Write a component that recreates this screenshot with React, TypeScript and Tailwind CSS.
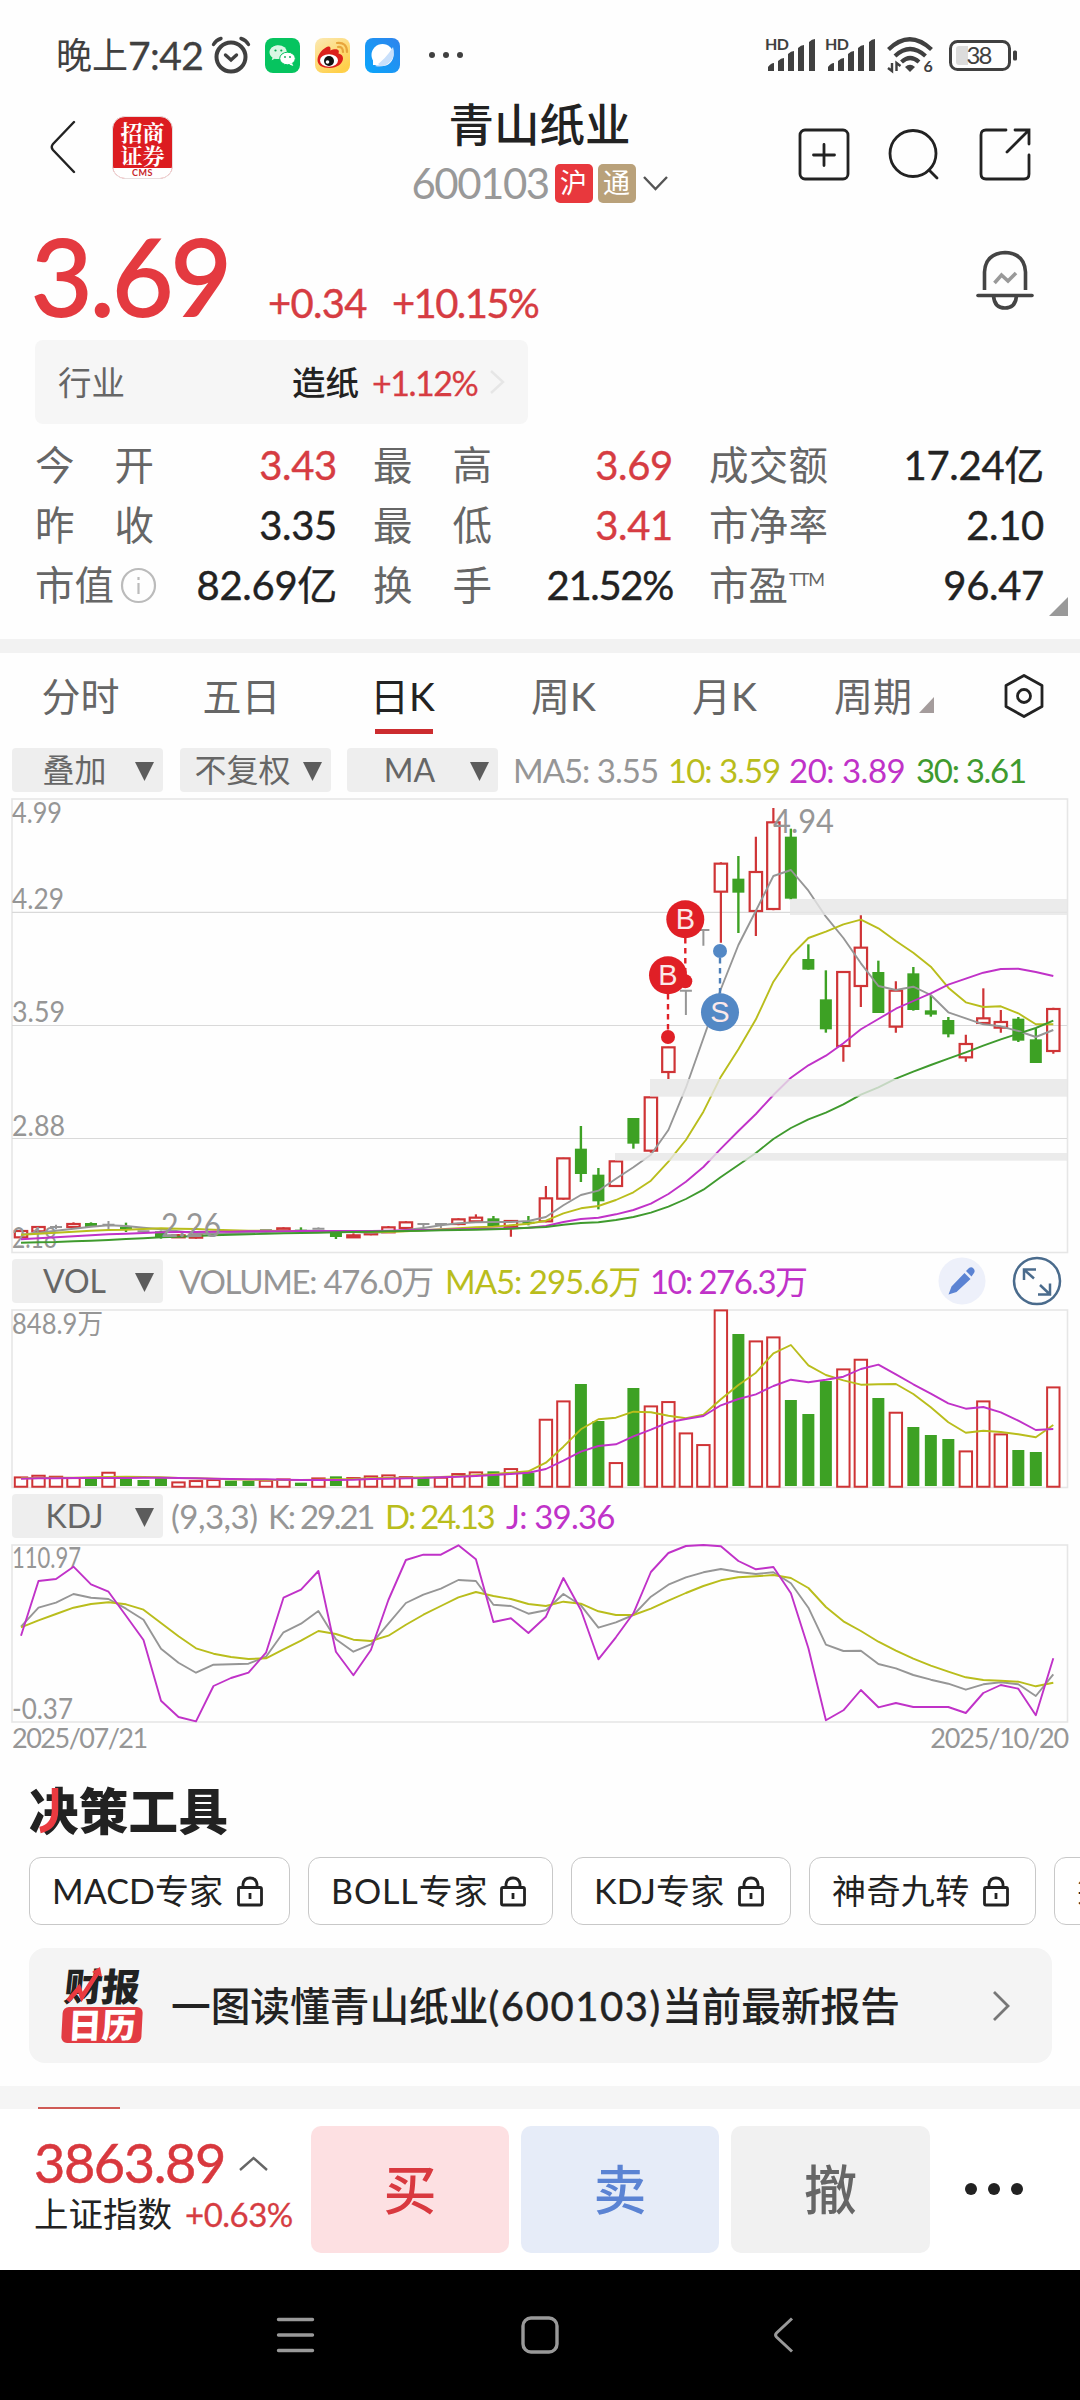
import type { ReactNode } from 'react';
import clsx from 'clsx';

type CandleKind = 'up' | 'down' | 'flat';

interface Candle {
  kind: CandleKind;
  high: number;
  top: number;
  bottom: number;
  low: number;
}

// Plot values are kept in thirds of a pixel, counted from the top of each canvas.
const px = (v: number) => v / 3;
const BAR_STEP = 17.497;
const barX = (i: number) => 21 + i * BAR_STEP;

const RED = '#cf3436';
const GREEN = '#3da124';
const GRAY = '#969696';
const YELLOW = '#b9bd1c';
const MAGENTA = '#c032c8';
const DARK_GREEN = '#3f9a2e';

const candle = (kind: CandleKind, high: number, top: number, bottom: number, low: number): Candle => ({
  kind,
  high,
  top,
  bottom,
  low,
});

const CANDLES: Candle[] = [
  candle('up', 1320, 1323, 1342, 1342),
  candle('up', 1309, 1311, 1324, 1324),
  candle('flat', 1304, 1311, 1311, 1318),
  candle('up', 1297, 1302, 1311, 1311),
  candle('down', 1297, 1299, 1311, 1311),
  candle('flat', 1293, 1304, 1304, 1320),
  candle('down', 1298, 1310, 1318, 1326),
  candle('flat', 1323, 1324, 1324, 1325),
  candle('down', 1322, 1324, 1344, 1346),
  candle('up', 1332, 1336, 1342, 1342),
  candle('up', 1335, 1336, 1343, 1346),
  candle('flat', 1328, 1330, 1330, 1332),
  candle('flat', 1322, 1324, 1324, 1326),
  candle('flat', 1320, 1323, 1323, 1325),
  candle('flat', 1318, 1320, 1320, 1322),
  candle('up', 1312, 1315, 1322, 1324),
  candle('down', 1312, 1319, 1323, 1325),
  candle('flat', 1312, 1316, 1316, 1319),
  candle('down', 1322, 1325, 1341, 1347),
  candle('up', 1330, 1336, 1342, 1342),
  candle('up', 1320, 1328, 1333, 1336),
  candle('up', 1308, 1312, 1327, 1327),
  candle('up', 1294, 1297, 1314, 1318),
  candle('flat', 1302, 1302, 1302, 1314),
  candle('flat', 1302, 1302, 1302, 1314),
  candle('up', 1285, 1288, 1302, 1306),
  candle('up', 1273, 1283, 1294, 1294),
  candle('down', 1278, 1285, 1308, 1310),
  candle('up', 1291, 1293, 1311, 1340),
  candle('down', 1278, 1295, 1301, 1306),
  candle('up', 1188, 1225, 1294, 1297),
  candle('up', 1103, 1105, 1226, 1229),
  candle('down', 1008, 1076, 1152, 1176),
  candle('down', 1134, 1154, 1234, 1258),
  candle('up', 1111, 1114, 1188, 1188),
  candle('down', 984, 984, 1061, 1076),
  candle('up', 920, 922, 1082, 1088),
  candle('up', 770, 772, 846, 867),
  candle('flat', 602, 602, 602, 675),
  candle('flat', 420, 420, 420, 467),
  candle('up', 217, 221, 305, 458),
  candle('down', 198, 266, 308, 429),
  candle('up', 140, 246, 363, 438),
  candle('up', 54, 97, 357, 361),
  candle('down', 116, 140, 326, 329),
  candle('down', 463, 507, 539, 539),
  candle('down', 541, 628, 718, 728),
  candle('up', 545, 546, 768, 815),
  candle('up', 376, 473, 588, 651),
  candle('down', 512, 546, 669, 669),
  candle('up', 574, 602, 710, 728),
  candle('down', 531, 550, 660, 662),
  candle('down', 616, 661, 674, 680),
  candle('down', 681, 690, 733, 742),
  candle('up', 734, 762, 802, 815),
  candle('up', 595, 685, 699, 699),
  candle('up', 660, 696, 713, 728),
  candle('down', 681, 686, 752, 756),
  candle('down', 715, 748, 819, 819),
  candle('up', 653, 657, 783, 791),
];

const PRICE_LINES = [
  {
    color: GRAY,
    values: [
      1334, 1328, 1322, 1316, 1310, 1306, 1308, 1313, 1318, 1324, 1330, 1332, 1330, 1328, 1326, 1324, 1322, 1322, 1324,
      1326, 1328, 1326, 1320, 1314, 1306, 1300, 1297, 1296, 1296, 1293, 1281, 1246, 1215, 1202, 1166, 1132, 1094, 1020,
      893, 745, 597, 465, 362, 258, 240, 302, 380, 444, 520, 588, 600, 590, 615, 667, 685, 703, 709, 723, 741, 720,
    ],
  },
  {
    color: YELLOW,
    values: [
      1334, 1331, 1328, 1325, 1322, 1320, 1319, 1317, 1315, 1316, 1317, 1319, 1321, 1322, 1322, 1323, 1323, 1324, 1325,
      1326, 1326, 1326, 1324, 1321, 1318, 1315, 1312, 1310, 1306, 1301, 1292, 1270, 1255, 1248, 1230, 1207, 1172, 1115,
      1050, 965, 860, 778, 688, 575, 497, 444, 425, 403, 389, 415, 453, 488, 530, 593, 637, 651, 649, 670, 703, 703,
    ],
  },
  {
    color: MAGENTA,
    values: [
      1348, 1345, 1342, 1339, 1336, 1333, 1331, 1329, 1327, 1326, 1326, 1325, 1325, 1324, 1324, 1324, 1323, 1323, 1323,
      1323, 1323, 1322, 1321, 1320, 1319, 1318, 1317, 1316, 1315, 1313, 1308, 1296, 1287, 1283, 1273, 1260, 1241, 1212,
      1175, 1131, 1076, 1023, 972, 915, 863, 826, 797, 760, 718, 687, 656, 633, 610, 584, 566, 548, 537, 536, 546, 558,
    ],
  },
  {
    color: DARK_GREEN,
    values: [
      1358, 1357, 1356, 1354, 1352, 1350, 1347, 1345, 1342, 1340, 1338, 1336, 1334, 1333, 1331, 1330, 1329, 1328, 1327,
      1326, 1325, 1324, 1323, 1322, 1321, 1320, 1319, 1318, 1316, 1313, 1311, 1304, 1299, 1297, 1290, 1281, 1268, 1250,
      1227, 1199, 1161, 1125, 1089, 1047, 1014, 988, 968, 943, 914, 892, 866, 845, 825, 806, 787, 767, 748, 731, 714,
      692,
    ],
  },
];

const VOLUME_TOPS = [
  681, 676, 679, 683, 684, 667, 685, 690, 683, 696, 692, 689, 692, 693, 691, 687, 698, 684, 679, 683, 678, 675, 680,
  684, 682, 671, 666, 664, 656, 668, 508, 453, 402, 513, 638, 414, 468, 455, 549, 584, 180, 252, 273, 261, 450, 492,
  393, 357, 328, 444, 487, 531, 555, 567, 603, 453, 552, 600, 606, 411,
];
const VOLUME_DOWN = [4, 6, 7, 8, 12, 13, 16, 18, 23, 27, 29, 32, 33, 35, 41, 44, 45, 46, 49, 51, 52, 53, 57, 58];

const VOLUME_LINES = [
  {
    color: YELLOW,
    values: [
      685, 684, 683, 683, 682, 681, 680, 681, 682, 684, 685, 686, 688, 689, 690, 690, 690, 689, 688, 687, 685, 684, 683,
      682, 681, 679, 676, 672, 668, 664, 638, 590, 538, 508, 503, 485, 487, 497, 505, 494, 448, 405, 368, 310, 285, 346,
      375, 391, 404, 403, 402, 432, 472, 517, 548, 542, 546, 553, 562, 525,
    ],
  },
  {
    color: MAGENTA,
    values: [
      686, 685, 685, 684, 684, 684, 684, 683, 683, 684, 685, 686, 687, 688, 688, 689, 690, 690, 690, 689, 687, 686, 685,
      684, 682, 680, 678, 675, 672, 668, 657, 632, 605, 588, 583, 559, 539, 517, 507, 498, 466, 447, 433, 408, 389, 397,
      389, 380, 357, 344, 373, 403, 431, 460, 476, 471, 487, 512, 540, 537,
    ],
  },
];

const KDJ_LINES = [
  {
    color: GRAY,
    values: [
      1130, 1073, 1058, 1032, 1043, 1047, 1076, 1109, 1196, 1238, 1268, 1244, 1243, 1241, 1220, 1147, 1121, 1083, 1168,
      1205, 1183, 1121, 1059, 1034, 1016, 990, 993, 1064, 1068, 1091, 1081, 1032, 1066, 1133, 1117, 1095, 1040, 1004,
      982, 967, 957, 966, 972, 967, 1000, 1073, 1184, 1203, 1202, 1242, 1255, 1275, 1289, 1301, 1319, 1303, 1297, 1303,
      1338, 1273,
    ],
  },
  {
    color: YELLOW,
    values: [
      1132, 1111, 1092, 1073, 1062, 1057, 1063, 1079, 1119, 1159, 1195, 1211, 1221, 1227, 1225, 1198, 1172, 1143, 1152,
      1169, 1173, 1157, 1124, 1094, 1068, 1042, 1026, 1038, 1047, 1062, 1068, 1055, 1061, 1084, 1095, 1095, 1076, 1052,
      1029, 1008, 991, 982, 979, 975, 984, 1014, 1071, 1114, 1143, 1175, 1202, 1226, 1247, 1265, 1282, 1290, 1292, 1295,
      1309, 1298,
    ],
  },
  {
    color: MAGENTA,
    values: [
      1157, 993, 987, 950, 1003, 1025, 1097, 1170, 1352, 1401, 1414, 1308, 1284, 1268, 1208, 1043, 1019, 963, 1205, 1276,
      1200, 1050, 930, 914, 914, 886, 928, 1116, 1105, 1149, 1100, 984, 1080, 1228, 1162, 1090, 966, 909, 888, 885, 889,
      933, 958, 951, 1030, 1195, 1411, 1381, 1320, 1372, 1359, 1371, 1371, 1371, 1389, 1329, 1305, 1316, 1396, 1225,
    ],
  },
];

const GAPS = [
  { x: 790, top: 327, bottom: 375 },
  { x: 650, top: 867, bottom: 920 },
  { x: 615, top: 1089, bottom: 1112 },
];

const linePoints = (values: number[]) => values.map((v, i) => `${barX(i).toFixed(1)},${px(v).toFixed(1)}`).join(' ');

const Lines = ({ lines }: { lines: { color: string; values: number[] }[] }) => (
  <>
    {lines.map((line) => (
      <polyline
        key={line.color}
        points={linePoints(line.values)}
        fill="none"
        stroke={line.color}
        strokeWidth="1.9"
        strokeLinejoin="round"
      />
    ))}
  </>
);

interface AxisTextProps {
  x: number;
  y: number;
  width: number;
  size?: number;
  children: string;
}

const AxisText = ({ x, y, width, size = 28, children }: AxisTextProps) => (
  <text x={x} y={y} fontSize={size} fill="#969696" textLength={width} lengthAdjust="spacingAndGlyphs">
    {children}
  </text>
);

const CandleMark = ({ item, index }: { item: Candle; index: number }) => {
  const x = barX(index);
  const top = px(item.top);
  const bottom = px(item.bottom);
  if (item.kind === 'flat') {
    return (
      <g stroke={GRAY} strokeWidth="2">
        <path d={`M${x - 6} ${top}h12M${x} ${px(item.high)}V${px(item.low)}`} />
      </g>
    );
  }
  if (item.kind === 'down') {
    return (
      <g>
        <path d={`M${x} ${px(item.high)}V${px(item.low)}`} stroke={GREEN} strokeWidth="2.4" />
        <rect x={x - 6} y={top} width="12" height={bottom - top} fill={GREEN} />
      </g>
    );
  }
  return (
    <g stroke={RED} strokeWidth="2.2" fill="none">
      <path d={`M${x} ${px(item.high)}V${top}M${x} ${bottom}V${px(item.low)}`} />
      <rect x={x - 6.2} y={top} width="12.4" height={bottom - top} />
    </g>
  );
};

const Marker = ({ x, y, color, letter }: { x: number; y: number; color: string; letter: string }) => (
  <g>
    <circle cx={x} cy={y} r="19" fill={color} />
    <text
      x={x}
      y={y + 10}
      textAnchor="middle"
      fontSize="29"
      fill="#fbe9ea"
      className="font-['Liberation_Sans',sans-serif]"
    >
      {letter}
    </text>
  </g>
);

// canvas starts at y = 790 of the page
const PriceChart = () => (
  <svg width="1080" height="469" viewBox="0 0 1080 469" className="block shrink-0">
    <rect x="12" y="9" width="1055.5" height="453.5" fill="none" stroke="#e6e6e6" strokeWidth="1.6" />
    {[122.3, 235.5, 348.5].map((y) => (
      <path key={y} d={`M12 ${y}H1067`} stroke="#d9d9d9" strokeWidth="1.2" />
    ))}
    {CANDLES.map((item, i) => (
      <CandleMark key={i} item={item} index={i} />
    ))}
    <AxisText x={12} y={457.5} width={45}>
      2.18
    </AxisText>
    <Lines lines={PRICE_LINES} />
    {GAPS.map((gap) => (
      <rect
        key={gap.top}
        x={gap.x}
        y={px(gap.top)}
        width={1067 - gap.x}
        height={px(gap.bottom - gap.top)}
        fill="#e6e6e6"
        opacity="0.8"
      />
    ))}
    <AxisText x={12} y={32.5} width={50}>
      4.99
    </AxisText>
    <AxisText x={12} y={119} width={52}>
      4.29
    </AxisText>
    <AxisText x={12} y={232} width={53}>
      3.59
    </AxisText>
    <AxisText x={12} y={345.5} width={53}>
      2.88
    </AxisText>
    <AxisText x={161} y={447} width={60} size={33}>
      2.26
    </AxisText>
    <AxisText x={773} y={43} width={61} size={33}>
      4.94
    </AxisText>
    <path d="M685.3 148v40M668 204v36" stroke="#e01f26" strokeWidth="2.4" strokeDasharray="5.5 4.5" />
    <path d="M720 168v36" stroke="#4d7fb8" strokeWidth="2.4" strokeDasharray="5.5 4.5" />
    <circle cx="685.3" cy="191.3" r="7" fill="#e01f26" />
    <circle cx="668" cy="247" r="7" fill="#e01f26" />
    <circle cx="720" cy="161" r="7" fill="#5388c5" />
    <Marker x={685.3} y={129.3} color="#e01f26" letter="B" />
    <Marker x={668} y={185.3} color="#e01f26" letter="B" />
    <Marker x={720} y={222.3} color="#5388c5" letter="S" />
  </svg>
);

// canvas starts at y = 1303, its values are counted from 1250
const VolumeChart = () => (
  <svg width="1080" height="191" viewBox="0 53 1080 191" className="block shrink-0">
    <rect x="12" y="60" width="1055.5" height="177.5" fill="none" stroke="#e6e6e6" strokeWidth="1.6" />
    <AxisText x={12} y={83.5} width={91}>
      848.9万
    </AxisText>
    {VOLUME_TOPS.map((top, i) =>
      VOLUME_DOWN.includes(i) ? (
        <rect key={i} x={barX(i) - 6} y={px(top)} width="12" height={px(708 - top)} fill={GREEN} />
      ) : (
        <rect
          key={i}
          x={barX(i) - 6.2}
          y={px(top) + 0.4}
          width="12.4"
          height={px(709 - top)}
          fill="#fff"
          stroke={RED}
          strokeWidth="2"
        />
      ),
    )}
    <Lines lines={VOLUME_LINES} />
  </svg>
);

// canvas starts at y = 1538, its values are counted from 1250
const KdjChart = () => (
  <svg width="1080" height="187" viewBox="0 288 1080 187" className="block shrink-0">
    <rect x="12" y="295" width="1055.5" height="177" fill="none" stroke="#e6e6e6" strokeWidth="1.6" />
    <AxisText x={12} y={318} width={69}>
      110.97
    </AxisText>
    <AxisText x={12} y={469} width={61}>
      -0.37
    </AxisText>
    <Lines lines={KDJ_LINES} />
  </svg>
);

const Signal = () => (
  <svg width="51" height="40" viewBox="0 -6 51 40" className="-mt-[6px]" fill="#404040">
    <text x="0" y="12" fontSize="16" fontWeight="700" textLength="24">
      HD
    </text>
    <path d="M3 33v-4q3-4 6-4v8zM13 33V23q3-3 6-3v13zM23 33V16q3-3 6-3v20zM33 33V10q3-3 6-3v26zM44 33V4q3-3 6-3v32z" />
  </svg>
);

const StatusBar = () => (
  <div className="flex h-[110px] shrink-0 items-center pl-[56px] pr-[62px] text-[#404040]">
    <span className="flex w-[155px] items-center whitespace-nowrap text-[36px] leading-[48px]">
      晚上
      <span className="text-[39px] tracking-[-0.6px] [-webkit-text-stroke:0.3px]">7:42</span>
    </span>
    <svg width="40" height="38" viewBox="0 0 40 38" fill="none" stroke="#404040" strokeWidth="4" strokeLinecap="round">
      <circle cx="20" cy="21" r="14.5" />
      <path d="M14.5 19l5.5 5 5.5-5M2.5 8.500Q5 4 10 2.500M37.500 8.500Q35 4 30 2.500" strokeWidth="3.4" />
    </svg>
    <svg width="35" height="35" viewBox="0 0 35 35" className="ml-[14px]">
      <rect width="35" height="35" rx="8" fill="#06c45f" />
      <path d="M13 7.500c-4.800 0-8.500 3-8.500 6.800 0 2.200 1.200 4 3 5.200l-.8 2.700 3-1.500c1 .3 2 .4 3.300.4z" fill="#d8f7e4" />
      <ellipse cx="13.500" cy="14.200" rx="8.500" ry="6.900" fill="#d8f7e4" />
      <ellipse cx="22.500" cy="20.500" rx="7.800" ry="6.300" fill="#fff" stroke="#06c45f" strokeWidth="1" />
      <path d="M27 25l1.300 3-4-1.600z" fill="#fff" />
      <g fill="#06a852">
        <circle cx="10.500" cy="12.500" r="1.100" />
        <circle cx="16.300" cy="12.500" r="1.100" />
        <circle cx="20" cy="19" r=".9" />
        <circle cx="25" cy="19" r=".9" />
      </g>
    </svg>
    <svg width="35" height="35" viewBox="0 0 35 35" className="ml-[15px]">
      <defs>
        <linearGradient id="weibo" x1="0" y1="0" x2="0.600" y2="1">
          <stop offset="0" stopColor="#fbe9b4" />
          <stop offset="1" stopColor="#ffd04a" />
        </linearGradient>
      </defs>
      <rect width="35" height="35" rx="8" fill="url(#weibo)" />
      <path
        d="M2.500 22c0-6 6-12 10.500-13.500 2-.6 3 1 2.300 4 3-1.500 8-2 8.500.5.200 1-.3 2-.3 2.500 3 .8 4.500 2.500 4.500 5 0 5-6 9.500-13.500 9.500S2.500 27 2.500 22z"
        fill="#dc1f1a"
      />
      <ellipse cx="14" cy="22.500" rx="9" ry="6.200" fill="#fff" />
      <circle cx="14" cy="23" r="5" fill="#111" />
      <circle cx="12.500" cy="24" r="1.800" fill="#fff" />
      <path d="M23 9q5-.5 5 5M22 5q10-1 10 9" fill="none" stroke="#e8a53c" strokeWidth="2.200" strokeLinecap="round" />
    </svg>
    <svg width="35" height="35" viewBox="0 0 35 35" className="ml-[15px]">
      <defs>
        <linearGradient id="cloud" x1="0" y1="1" x2="1" y2="0">
          <stop offset="0" stopColor="#0aa6fb" />
          <stop offset="1" stopColor="#2f83ec" />
        </linearGradient>
      </defs>
      <rect width="35" height="35" rx="8" fill="url(#cloud)" />
      <circle cx="17.500" cy="17" r="11" fill="#fff" />
      <path d="M28 9q3 9-3 15t-15 4q10-6 18-19z" fill="#c9e0fb" />
      <path d="M8 19v8h6z" fill="#fff" />
    </svg>
    <div className="ml-[29px] flex gap-2">
      <i className="size-[6px] rounded-full bg-[#404040]" />
      <i className="size-[6px] rounded-full bg-[#404040]" />
      <i className="size-[6px] rounded-full bg-[#404040]" />
    </div>
    <div className="ml-auto flex items-center">
      <Signal />
      <div className="ml-[9px]">
        <Signal />
      </div>
      <svg width="47" height="40" viewBox="0 -1 47 40" className="ml-[11px] mt-[2px]" fill="none" stroke="#404040">
        <path d="M1.500 12.500Q22.500-8 44.500 12.500M8 19Q23 5 38.500 19M14.500 25Q23 17 32 25" strokeWidth="4.200" />
        <path d="M18 30q5-4.500 10 0l-5 5z" fill="#404040" stroke="none" />
        <path d="M5 26v8l-4-3M9.500 34v-8l4 3" strokeWidth="2.400" />
        <text x="36.500" y="34.500" fontSize="16" fontWeight="700" fill="#404040" stroke="none">
          6
        </text>
      </svg>
      <svg width="69" height="31" viewBox="0 0 69 31" className="ml-[15px]">
        <rect x="1.500" y="1.500" width="59" height="28" rx="7" fill="none" stroke="#404040" strokeWidth="3" />
        <path d="M10 6h9v19h-9q-3 0-3-3V9q0-3 3-3z" fill="#dcdcdc" />
        <rect x="64" y="10.500" width="4" height="10" rx="1.500" fill="#404040" />
        <text x="17.500" y="24" fontSize="24" fill="#404040" textLength="26">
          38
        </text>
      </svg>
    </div>
  </div>
);

const Header = () => (
  <div className="flex h-[105px] shrink-0 text-[#222]">
    <div className="flex w-[412px] items-start pl-[49px]">
      <svg width="27" height="54" viewBox="0 0 27 54" className="mt-[10px]" fill="none" stroke="#222" strokeWidth="2.400">
        <path d="M25 2L4 24q-2.500 3 0 6l21 22" strokeLinecap="round" />
      </svg>
      <div className="ml-9 mt-[6px] h-[63px] w-[61px] overflow-hidden rounded-[13px] border border-[#e8dede] bg-[#dc1c20] text-center text-white">
        <div className="pt-[3px] font-['Noto_Serif_CJK_SC','Noto_Sans_CJK_SC',serif] text-[22px] font-bold leading-[23px]">
          招商
          <br />
          证券
        </div>
        <div className="mt-[2px] h-3 bg-white text-[9px] font-bold leading-[10px] tracking-[0.5px] text-[#c8272b]">CMS</div>
      </div>
    </div>
    <div className="flex w-[255px] flex-col items-center">
      <h1 className="mt-[-8px] h-[46px] whitespace-nowrap text-[45.500px] font-medium leading-[46px]">青山纸业</h1>
      <div className="mt-[12px] flex h-[46px] items-center">
        <span className="w-[143px] text-[42px] leading-[44px] tracking-[-1.500px] text-[#999]">600103</span>
        <span className="h-[39px] w-[38px] rounded-[5px] bg-[#e8383d] text-center text-[27px] leading-[38px] text-white">
          沪
        </span>
        <span className="ml-[5px] h-[39px] w-[38px] rounded-[5px] bg-[#b9a17a] text-center text-[27px] leading-[38px] text-white">
          通
        </span>
        <svg width="25" height="15" viewBox="0 0 25 15" className="ml-[7px]" fill="none" stroke="#555" strokeWidth="2.400">
          <path d="M1 1l11.500 12L24 1" />
        </svg>
      </div>
    </div>
    <div className="flex flex-1 items-start justify-end pr-[48px] pt-[18px]">
      <svg width="52" height="54" viewBox="0 0 52 54" fill="none" stroke="#222" strokeWidth="2.800" strokeLinecap="round">
        <rect x="2" y="2" width="48" height="49" rx="5" />
        <path d="M26 16.500v21M15.500 27h21" />
      </svg>
      <svg
        width="52"
        height="54"
        viewBox="0 0 52 54"
        className="ml-[38px]"
        fill="none"
        stroke="#222"
        strokeWidth="2.800"
        strokeLinecap="round"
      >
        <circle cx="25" cy="25.500" r="23" />
        <path d="M41 42l8 8" />
      </svg>
      <svg
        width="54"
        height="54"
        viewBox="0 0 54 54"
        className="ml-[38px]"
        fill="none"
        stroke="#222"
        strokeWidth="2.800"
        strokeLinecap="round"
      >
        <path d="M28 2H8Q3 2 3 7v39q0 5 5 5h38q5 0 5-5V27M37 2h14v14M50 3L29 24" />
      </svg>
    </div>
  </div>
);

const Quote = () => (
  <div className="flex h-[125px] shrink-0 text-[#e43a40]">
    <span className="mt-[8px] w-[236px] pl-[31px] text-[106px] leading-[104px] tracking-[-2.800px] [-webkit-text-stroke:1.8px]">
      3.69
    </span>
    <span className="ml-[32px] mt-[65px] w-[124px] whitespace-nowrap text-[40px] leading-[46px] tracking-[-0.7px] text-[#d63c42] [-webkit-text-stroke:0.4px]">
      +0.34
    </span>
    <span className="mt-[65px] whitespace-nowrap text-[40px] leading-[46px] tracking-[-1.600px] text-[#d63c42] [-webkit-text-stroke:0.4px]">
      +10.15%
    </span>
    <svg width="58" height="60" viewBox="0 0 58 60" className="ml-auto mr-[46px] mt-[35px]" fill="none" stroke="#444" strokeWidth="3.600">
      <path d="M8.500 40V22Q9.500 3.500 29 2.500 48.500 3.500 49.500 22v18" />
      <path d="M2 45.500h54" strokeLinecap="round" />
      <path d="M17.500 46q1 12 11.500 12t11.500-12" />
      <path d="M18.500 33l7-8 6.500 6 8-8" stroke="#999" />
    </svg>
  </div>
);

const Industry = () => (
  <div className="mx-[35px] flex h-[84px] w-[493px] shrink-0 items-center rounded-[8px] bg-[#f6f6f6] pl-[23px]">
    <span className="text-[33.500px] text-[#666]">行业</span>
    <span className="ml-[167px] text-[33.500px] font-medium text-[#222]">造纸</span>
    <span className="ml-[13px] w-[118px] whitespace-nowrap text-[34px] tracking-[-1.500px] text-[#d63c42] [-webkit-text-stroke:0.3px]">
      +1.12%
    </span>
    <svg width="15" height="24" viewBox="0 0 15 24" fill="none" stroke="#e6e6e6" strokeWidth="2.400">
      <path d="M1 1l12 11L1 23" />
    </svg>
  </div>
);

interface StatProps {
  label: string;
  value: string;
  red?: boolean;
  extra?: ReactNode;
}

const STATS: StatProps[] = [
  { label: '今开', value: '3.43', red: true },
  { label: '最高', value: '3.69', red: true },
  { label: '成交额', value: '17.24亿' },
  { label: '昨收', value: '3.35' },
  { label: '最低', value: '3.41', red: true },
  { label: '市净率', value: '2.10' },
  {
    label: '市值',
    value: '82.69亿',
    extra: (
      <svg width="37" height="37" viewBox="0 0 37 37" fill="none" stroke="#bbb" strokeWidth="2.200" className="ml-[6px] shrink-0">
        <circle cx="18.500" cy="18.500" r="16.500" />
        <path d="M18.500 16v11M18.500 10v3" />
      </svg>
    ),
  },
  { label: '换手', value: '21.52%' },
  {
    label: '市盈',
    value: '96.47',
    extra: <span className="mb-3 ml-[1px] text-[18px] leading-none tracking-[-1px]">TTM</span>,
  },
];

const Stat = ({ label, value, red, extra }: StatProps) => (
  <div className="flex h-[60px] items-center justify-between whitespace-nowrap">
    <div className={clsx('flex w-[119px] items-center text-[39.5px] text-[#666]', !extra && 'justify-between')}>
      {extra ? (
        <>
          <span>{label}</span>
          {extra}
        </>
      ) : (
        label.split('').map((char) => <span key={char}>{char}</span>)
      )}
    </div>
    <span
      className={clsx(
        'text-[40px] [-webkit-text-stroke:0.4px]',
        value.endsWith('%') ? 'tracking-[-1.300px]' : 'tracking-[-0.300px]',
        red ? 'text-[#d63c42]' : 'text-[#222]',
      )}
    >
      {value}
    </span>
  </div>
);

const Stats = () => (
  <div className="relative h-[215px] shrink-0 pl-[35px] pt-[11px]">
    <div className="grid grid-cols-[302px_300px_335px] gap-x-[36px]">
      {STATS.map((stat) => (
        <Stat key={stat.label} {...stat} />
      ))}
    </div>
    <svg width="19" height="19" viewBox="0 0 19 19" className="absolute left-[1049px] top-[173px]">
      <path d="M19 0v19H0z" fill="#999" />
    </svg>
  </div>
);

const TABS = ['分时', '五日', '日K', '周K', '月K', '周期'];

const Tabs = () => (
  <div className="flex h-[95px] shrink-0 text-[39px] leading-[87px] text-[#666]">
    {TABS.map((tab) => (
      <div
        key={tab}
        className={clsx('relative w-[161px] text-center', tab === '日K' && 'text-[#222]', tab === '周期' && 'pr-[25px]')}
      >
        {tab}
        {tab === '日K' && <i className="absolute left-[53px] top-[76px] h-[5px] w-[58px] bg-[#cc2c2f]" />}
        {tab === '周期' && (
          <svg width="15" height="16" viewBox="0 0 15 16" className="absolute left-[114px] top-[44px]">
            <path d="M15 0v16H0z" fill="#a49c9c" />
          </svg>
        )}
      </div>
    ))}
    <svg width="42" height="46" viewBox="0 0 42 46" className="ml-[37px] mt-[20px]" fill="none" stroke="#222" strokeWidth="2.800">
      <path d="M21 2.500L39 12.500v21L21 43.500 3 33.500v-21z" strokeLinejoin="round" />
      <circle cx="21" cy="23" r="6.500" />
    </svg>
  </div>
);

const Pill = ({ children }: { children: string }) => (
  <div className="relative h-[44px] w-[151px] rounded-[4px] bg-[#eee] pr-[26px] text-center text-[32px] leading-[44px] text-[#666]">
    {children}
    <svg width="19" height="19" viewBox="0 0 19 19" className="absolute right-[9px] top-[14px]">
      <path d="M0 0h19l-9.500 19z" fill="#5c5c5c" />
    </svg>
  </div>
);

const MainFilters = () => (
  <div className="flex h-[42px] shrink-0 items-start pl-3 text-[33px] leading-[44px]">
    <Pill>叠加</Pill>
    <div className="ml-[17px]">
      <Pill>不复权</Pill>
    </div>
    <div className="ml-4">
      <Pill>MA</Pill>
    </div>
    <div className="ml-[15px] flex whitespace-nowrap tracking-[-1px]">
      <span className="w-[155px] text-[#969696]">MA5: 3.55</span>
      <span className="w-[121px] text-[#b9bd1c]">10: 3.59</span>
      <span className="w-[127px] tracking-[-0.500px] text-[#c032c8]">20: 3.89</span>
      <span className="tracking-[-1.300px] text-[#3f9a2e]">30: 3.61</span>
    </div>
  </div>
);

const VolumeHeader = () => (
  <div className="flex h-[44px] shrink-0 items-center pl-3 text-[33px] leading-[44px]">
    <Pill>VOL</Pill>
    <div className="ml-4 flex whitespace-nowrap tracking-[-1.300px]">
      <span className="w-[266px] text-[#969696]">VOLUME: 476.0万</span>
      <span className="w-[205px] tracking-[-1px] text-[#b9bd1c]">MA5: 295.6万</span>
      <span className="w-[160px] tracking-[-1.600px] text-[#c032c8]">10: 276.3万</span>
    </div>
    <svg width="48" height="48" viewBox="0 0 48 48" className="-my-1 ml-[128px]">
      <circle cx="24" cy="24" r="23.500" fill="#edf0fa" />
      <path d="M10.500 37.500l3-8 13-13.500 6 6-14 13z M28 14l3-3q2.500-1.500 4.500.5t.5 4.500l-2.500 3.500z" fill="#5b83d3" />
    </svg>
    <svg width="50" height="50" viewBox="0 0 50 50" className="-my-1 ml-[26px]" fill="none" stroke="#4a6b8c" strokeWidth="2.500">
      <circle cx="25" cy="25" r="23" />
      <path d="M12 24V13.500h12M12.500 14L22 22.500M26 38.500h12V27.500M28 29l9.500 9" />
    </svg>
  </div>
);

const KdjHeader = () => (
  <div className="flex h-[44px] shrink-0 items-center pl-3 text-[33px] leading-[44px]">
    <Pill>KDJ</Pill>
    <div className="ml-2 flex whitespace-nowrap tracking-[-2.200px]">
      <span className="w-[97px] tracking-[-0.500px] text-[#969696]">(9,3,3)</span>
      <span className="w-[117px] text-[#969696]">K: 29.21</span>
      <span className="w-[121px] text-[#b9bd1c]">D: 24.13</span>
      <span className="tracking-[-0.800px] text-[#c032c8]">J: 39.36</span>
    </div>
  </div>
);

const Lock = () => (
  <svg width="26" height="31" viewBox="0 0 26 31" fill="none" stroke="#222" strokeWidth="2.800">
    <rect x="1.500" y="11.500" width="23" height="17.500" rx="1.500" />
    <path d="M6 11V8q1-6 7-6t7 6v3M13 17v6" />
  </svg>
);

const TOOLS = [
  { name: 'MACD专家', style: 'w-[261px] tracking-[0.1px]' },
  { name: 'BOLL专家', style: 'w-[245px] tracking-[0.9px]' },
  { name: 'KDJ专家', style: 'w-[220px] tracking-[0.2px]' },
  { name: '神奇九转', style: 'w-[227px] tracking-[0.4px]' },
  { name: '筹码分布', style: 'w-[227px] tracking-[0.4px]' },
];

const Tools = () => (
  <div className="shrink-0 overflow-hidden pl-[29px]">
    <div className="relative mt-[31px] h-[52px]">
      <h2 className="text-[49.500px] font-black leading-[50px] tracking-[0.3px] text-[#222]">决策工具</h2>
      <svg width="24" height="48" viewBox="0 0 24 48" className="absolute left-[9px] top-[1px]">
        <path d="M17 1v22q0 17-15 20" fill="none" stroke="#ea3a40" strokeWidth="6.500" />
      </svg>
    </div>
    <div className="mt-[19px] flex gap-[18px] text-[34px] text-[#222]">
      {TOOLS.map((tool) => (
        <div
          key={tool.name}
          className={clsx(
            'flex h-[68px] shrink-0 items-center justify-between rounded-[12px] border border-[#c8c8c8] bg-white pl-[22px] pr-[26px] leading-[66px]',
            tool.style,
          )}
        >
          <span className="whitespace-nowrap">{tool.name}</span>
          <Lock />
        </div>
      ))}
    </div>
  </div>
);

const ReportCard = () => (
  <div className="ml-[29px] mt-[23px] flex h-[115px] w-[1023px] shrink-0 items-center rounded-[16px] bg-[#f4f4f4]">
    <div className="relative ml-[33px] mt-[-2px] w-[80px]">
      <div className="-skew-x-6 text-center text-[38px] font-black leading-[38px] tracking-[-0.5px] text-[#222]">财报</div>
      <div className="mt-[2px] -skew-x-3 rounded-[6px] bg-[#e23c43] text-center text-[34px] font-black leading-[36px] text-white">
        日历
      </div>
      <svg width="42" height="38" viewBox="0 0 42 38" className="absolute left-[2px] top-0">
        <path d="M4 34l11-13 3 9L34 5" fill="none" stroke="#ea3a40" strokeWidth="4.500" />
        <path d="M28 5l8-5 2 10z" fill="#ea3a40" />
      </svg>
    </div>
    <span className="ml-[29px] whitespace-nowrap text-[39.700px] font-medium text-[#222]">
      一图读懂青山纸业
      <span className="text-[40px] font-normal tracking-[1.600px] [-webkit-text-stroke:0.5px]">(600103)</span>
      当前最新报告
    </span>
    <svg width="19" height="30" viewBox="0 0 19 30" className="ml-auto mr-[41px]" fill="none" stroke="#777" strokeWidth="2.800">
      <path d="M2 1l14 14L2 29" />
    </svg>
  </div>
);

const TradeBar = () => (
  <div className="flex h-[161px] shrink-0 bg-white">
    <div className="w-[311px] pl-[34px] pt-[24px]">
      <div className="flex h-[60px] items-center">
        <span className="w-[205px] text-[54px] leading-[60px] tracking-[-1.400px] text-[#d8383e] [-webkit-text-stroke:0.5px]">
          3863.89
        </span>
        <svg width="29" height="15" viewBox="0 0 29 15" fill="none" stroke="#666" strokeWidth="2.400">
          <path d="M1 14L14.500 2 28 14" />
        </svg>
      </div>
      <div className="mt-[-1px] flex h-[44px] items-center whitespace-nowrap leading-[44px]">
        <span className="w-[151px] text-[34.500px] text-[#222]">上证指数</span>
        <span className="text-[33px] tracking-[-0.500px] text-[#d63c42] [-webkit-text-stroke:0.3px]">+0.63%</span>
      </div>
    </div>
    <div className="mt-[17px] flex h-[127px] gap-3 text-center text-[53px] font-medium leading-[127px]">
      <button className="w-[198px] rounded-[10px] bg-[#fde0e2] text-[#d9393f]">买</button>
      <button className="w-[198px] rounded-[10px] bg-[#e6ecf8] text-[#5b83d3]">卖</button>
      <button className="w-[199px] rounded-[10px] bg-[#f1f1f1] text-[#666]">撤</button>
    </div>
    <div className="ml-[35px] mt-[74px] flex gap-[11px]">
      <i className="size-3 rounded-full bg-[#222]" />
      <i className="size-3 rounded-full bg-[#222]" />
      <i className="size-3 rounded-full bg-[#222]" />
    </div>
  </div>
);

const SystemNav = () => (
  <div className="flex h-[130px] shrink-0 items-center bg-black pl-[276px]">
    <svg width="39" height="36" viewBox="0 0 39 36" fill="none" stroke="#999" strokeWidth="3.400" strokeLinecap="round">
      <path d="M2.500 2.500h34M2.500 18h34M2.500 33.500h34" />
    </svg>
    <svg width="38" height="38" viewBox="0 0 38 38" className="ml-[206px]" fill="none" stroke="#999" strokeWidth="3.400">
      <rect x="2" y="2" width="34" height="34" rx="8" />
    </svg>
    <svg width="21" height="36" viewBox="0 0 21 36" className="ml-[214px]" fill="none" stroke="#999" strokeWidth="3">
      <path d="M19 1.500L3.500 16q-2 2 0 4L19 34.500" />
    </svg>
  </div>
);

const App = () => (
  <div className="flex h-[2400px] w-[1080px] flex-col overflow-hidden bg-[#fefefe] font-['Lato','Noto_Sans_CJK_SC',sans-serif]">
    <StatusBar />
    <Header />
    <Quote />
    <Industry />
    <Stats />
    <div className="h-[14px] shrink-0 bg-[#f2f2f2]" />
    <Tabs />
    <MainFilters />
    <PriceChart />
    <VolumeHeader />
    <VolumeChart />
    <KdjHeader />
    <KdjChart />
    <div className="flex h-[30px] shrink-0 justify-between pl-3 pr-[12px] text-[27px] leading-[26px] tracking-[-1.500px] text-[#969696]">
      <span>2025/07/21</span>
      <span className="tracking-[-1.200px]">2025/10/20</span>
    </div>
    <Tools />
    <ReportCard />
    <div className="mt-[23px] h-[23px] shrink-0 bg-[#f5f5f5] pl-[38px] pt-[21px]">
      <div className="h-[2px] w-[82px] bg-[#cf5a55]" />
    </div>
    <TradeBar />
    <SystemNav />
  </div>
);

export default App;
